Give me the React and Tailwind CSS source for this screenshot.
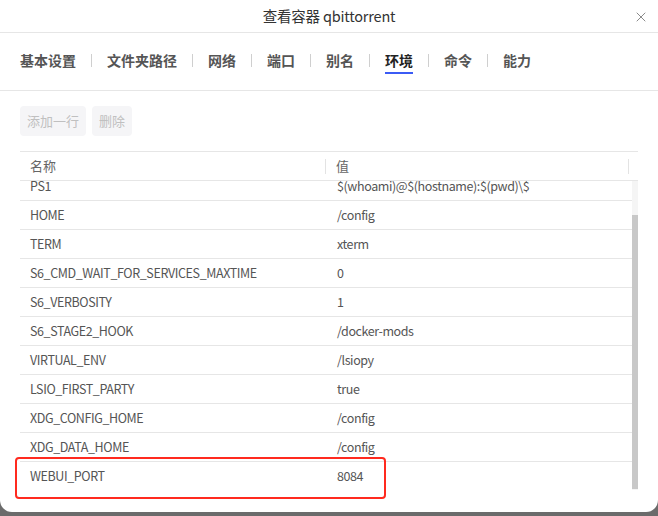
import React from "react";
import { X } from "lucide-react";

const tabs = ["基本设置", "文件夹路径", "网络", "端口", "别名", "环境", "命令", "能力"];
const rows = [
  ["PATH", "/lsiopy/bin:/command:/usr/local/sbin:/usr/local/bin:/usr/sbin:/usr/bin:/sbin:/bin"],
  ["PS1", "$(whoami)@$(hostname):$(pwd)\\$"],
  ["HOME", "/config"],
  ["TERM", "xterm"],
  ["S6_CMD_WAIT_FOR_SERVICES_MAXTIME", "0"],
  ["S6_VERBOSITY", "1"],
  ["S6_STAGE2_HOOK", "/docker-mods"],
  ["VIRTUAL_ENV", "/lsiopy"],
  ["LSIO_FIRST_PARTY", "true"],
  ["XDG_CONFIG_HOME", "/config"],
  ["XDG_DATA_HOME", "/config"],
  ["WEBUI_PORT", "8084"],
];

export default function App() {
  return (
    <div className="w-[658px] h-[516px] bg-[#6b6b6b] overflow-hidden font-['Noto_Sans_CJK_SC',sans-serif]">
      <div className="relative h-[512px] bg-white rounded-b-[12px] flex flex-col">
        {/* header */}
        <div className="h-[33px] border-b border-[#e6e6e6] flex items-center justify-center relative">
          <span className="text-[14.5px] leading-[20px] tracking-[-0.2px] text-[#333]">查看容器 qbittorrent</span>
          <button className="absolute right-[9px] top-[9px] text-[#8a8a8a]">
            <X size={16} strokeWidth={1.5} />
          </button>
        </div>
        {/* tabs */}
        <div className="h-[58px] border-b border-[#e6e6e6] flex items-start pt-[17px] px-5">
          {tabs.map((t, i) => (
            <React.Fragment key={t}>
              {i > 0 && <div className="w-px h-[13px] bg-[#cfcfcf] mx-[15px] mt-[4px]" />}
              <div className="flex flex-col items-stretch">
                <span
                  className={
                    "text-[14px] leading-[20px] font-semibold " +
                    (t === "环境" ? "text-[#222]" : "text-[#555]")
                  }
                >
                  {t}
                </span>
                <div className={"h-[2px] mt-[2px] " + (t === "环境" ? "bg-[#3b5bf5]" : "bg-transparent")} />
              </div>
            </React.Fragment>
          ))}
        </div>
        {/* content */}
        <div className="px-5 pt-[15px] flex flex-col">
          <div className="flex gap-[6px]">
            <button className="h-[30px] px-[7px] rounded-[4px] bg-[#f5f5f7] text-[13px] text-[#c0c0c0]">添加一行</button>
            <button className="h-[30px] px-[7px] rounded-[4px] bg-[#f5f5f7] text-[13px] text-[#c0c0c0]">删除</button>
          </div>
          <div className="mt-[15px] border-t border-[#e6e6e6]">
            <div className="h-[29px] border-b border-[#e6e6e6] flex items-center text-[13px] text-[#666]">
              <div className="w-[305px] pl-[10px] flex items-center">名称</div>
              <div className="w-px h-[15px] bg-[#e3e3e3]" />
              <div className="flex-1 pl-[10px]">值</div>
              <div className="w-px h-[15px] bg-[#e3e3e3] mr-[9px]" />
            </div>
            <div className="flex h-[309px]">
              <div className="flex-1 overflow-hidden">
                <div className="mt-[-38px]">
                  {rows.map(([k, v]) => (
                    <div key={k} className="h-[29px] border-b border-[#e6e6e6] flex items-center text-[12.5px] tracking-[-0.4px] text-[#555]">
                      <div className="w-[306px] pl-[10px] whitespace-nowrap">{k}</div>
                      <div className="flex-1 pl-[11px] whitespace-nowrap overflow-hidden">{v}</div>
                    </div>
                  ))}
                </div>
              </div>
              <div className="w-[6px] flex flex-col bg-[#f5f5f5]">
                <div className="h-[34px]" />
                <div className="h-[274px] bg-[#c8c8c8]" />
              </div>
            </div>
          </div>
        </div>
        {/* annotation */}
        <div className="absolute left-[15px] top-[457px] w-[371px] h-[42px] border-2 border-[#ff2a1f] rounded-[4px] pointer-events-none" />
      </div>
    </div>
  );
}
